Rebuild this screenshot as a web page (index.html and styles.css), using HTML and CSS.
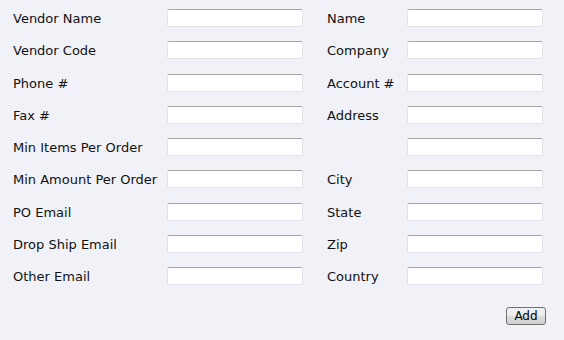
FILE: index.html
```html
<!DOCTYPE html>
<html lang="en">
<head>
  <meta charset="UTF-8" />
  <title>Vendor</title>
  <link rel="stylesheet" href="styles.css">
</head>
<body>
  <form class="vendor-form">
    <div class="form-grid">
      <label>Vendor Name</label><input type="text"><label>Name</label><input type="text">
      <label>Vendor Code</label><input type="text"><label>Company</label><input type="text">
      <label>Phone #</label><input type="text"><label>Account #</label><input type="text">
      <label>Fax #</label><input type="text"><label>Address</label><input type="text">
      <label>Min Items Per Order</label><input type="text"><label></label><input type="text">
      <label>Min Amount Per Order</label><input type="text"><label>City</label><input type="text">
      <label>PO Email</label><input type="text"><label>State</label><input type="text">
      <label>Drop Ship Email</label><input type="text"><label>Zip</label><input type="text">
      <label>Other Email</label><input type="text"><label>Country</label><input type="text">
    </div>
    <div class="form-actions">
      <button type="button" class="btn">Add</button>
    </div>
  </form>
</body>
</html>
```

FILE: styles.css
```css
* {
  margin: 0;
  padding: 0;
  box-sizing: border-box;
}

html, body {
  background: #f0f2f7;
  font-family: "DejaVu Sans", Verdana, sans-serif;
  font-size: 13px;
  color: #111;
  min-height: 100vh;
}

.vendor-form {
  padding: 9px 0 0 13px;
}

.form-grid {
  display: grid;
  grid-template-columns: 154px 136px 24px 80px 136px;
  grid-auto-rows: 18px;
  row-gap: 14.25px;
  align-items: center;
}

.form-grid label {
  white-space: nowrap;
  padding-top: 1px;
}

.form-grid label:nth-of-type(2n) {
  grid-column: 4;
}

.form-grid input {
  height: 18px;
  width: 136px;
  border: 1px solid #e1e3e8;
  border-top-color: #a5a5a5;
  border-radius: 2px;
  background: #fff;
}

.form-actions {
  display: flex;
  justify-content: flex-end;
  padding: 22px 18px 0 0;
}

.btn {
  font-family: "DejaVu Sans", Verdana, sans-serif;
  font-size: 12px;
  width: 40px;
  height: 18px;
  border: 1px solid #707070;
  border-radius: 3px;
  background: linear-gradient(#f2f2f2 0%, #ebebeb 50%, #dddddd 51%, #cfcfcf 100%);
  color: #000;
}
```
